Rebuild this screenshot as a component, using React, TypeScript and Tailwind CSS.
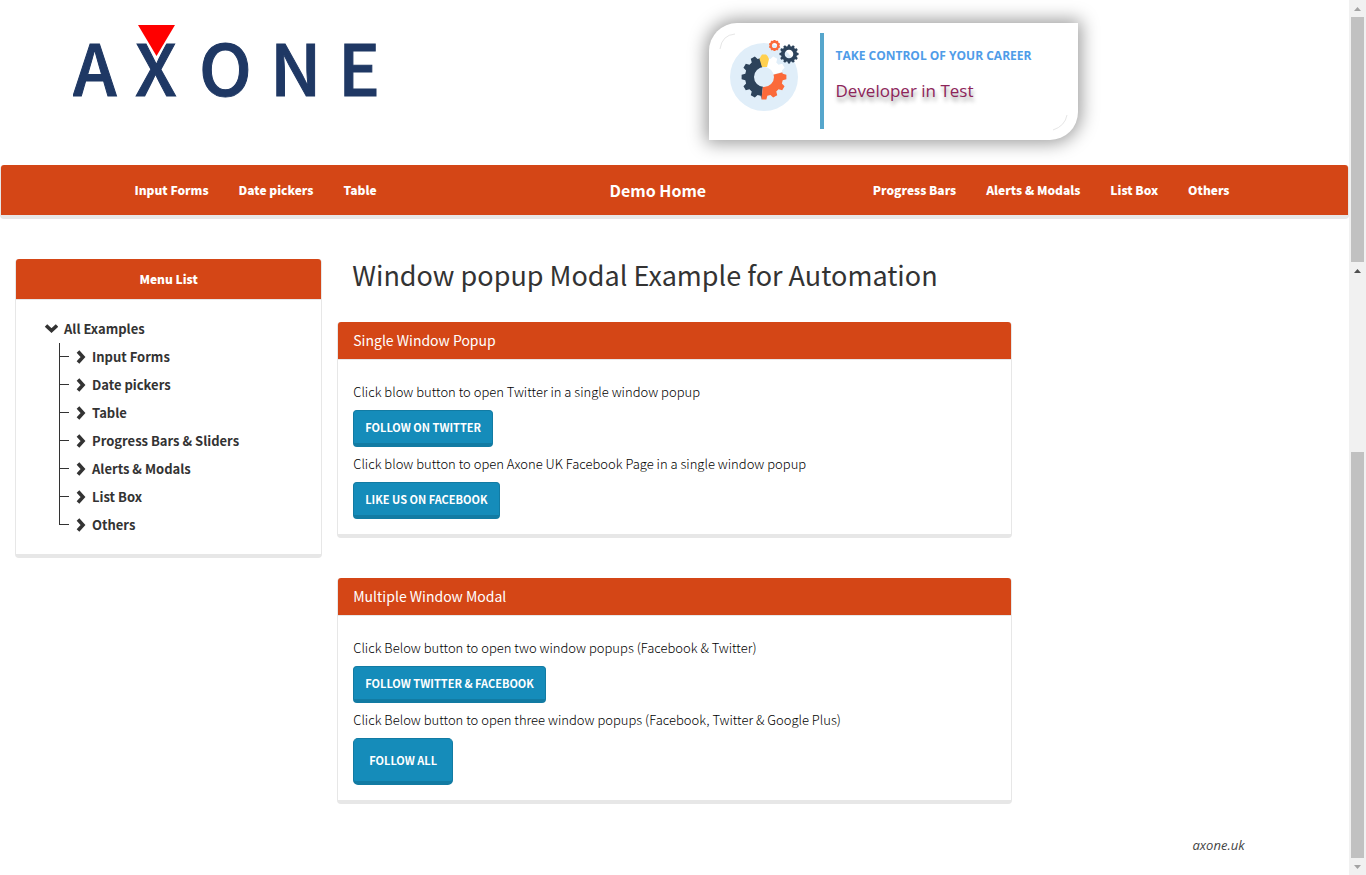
import React from "react";

const leftLinks = ["Input Forms", "Date pickers", "Table"];
const rightLinks = ["Progress Bars", "Alerts & Modals", "List Box", "Others"];
const examples = [
  "Input Forms",
  "Date pickers",
  "Table",
  "Progress Bars & Sliders",
  "Alerts & Modals",
  "List Box",
  "Others",
];

function Logo() {
  return (
    <svg viewBox="0 -12 320 112" className="h-[112px] w-[320px]" role="img" aria-label="Axone">
      <text
        x="0 62 126 197 265"
        y="73"
        fontSize="70"
        fontWeight="500"
        fill="#1f3864"
        stroke="#1f3864"
        strokeWidth="1"
        fontFamily="'Noto Sans CJK SC', sans-serif"
      >
        AXONE
      </text>
      <path d="M61 -4 L107 -4 L84 37 Z" fill="#fff" />
      <path d="M65 2 L102 2 L83.500 33 Z" fill="#f00" />
    </svg>
  );
}

function gearPath(cx: number, cy: number, outer: number, inner: number, hole: number, teeth: number) {
  const step = (Math.PI * 2) / teeth;
  const points: string[] = [];
  for (let i = 0; i < teeth; i++) {
    const mid = i * step - Math.PI / 2;
    const corners: [number, number][] = [
      [inner, -0.34],
      [outer, -0.2],
      [outer, 0.2],
      [inner, 0.34],
    ];
    for (const [r, f] of corners) {
      points.push(
        `${(cx + r * Math.cos(mid + f * step)).toFixed(2)} ${(cy + r * Math.sin(mid + f * step)).toFixed(2)}`
      );
    }
  }
  return `M${points.join("L")}Z M${cx - hole} ${cy}a${hole} ${hole} 0 1 0 ${hole * 2} 0a${hole} ${hole} 0 1 0 ${-hole * 2} 0Z`;
}

function Gears() {
  const big = gearPath(34, 37, 22.5, 19, 10, 12);
  return (
    <svg viewBox="0 0 70 72" className="h-[72px] w-[70px]" aria-hidden="true">
      <defs>
        <clipPath id="navyPart">
          <path d="M34 37 L29 10 L0 10 L0 72 L30 72 Z" />
        </clipPath>
        <clipPath id="whitePart">
          <path d="M34 37 L39 8 L70 8 L70 27 Z" />
        </clipPath>
        <clipPath id="orangePart">
          <path d="M34 37 L70 28 L70 72 L30 72 Z" />
        </clipPath>
      </defs>
      <circle cx="34" cy="37" r="34" fill="#e0eef9" />
      <path d={big} fillRule="evenodd" fill="#2d435b" clipPath="url(#navyPart)" />
      <path d={big} fillRule="evenodd" fill="#fff" clipPath="url(#whitePart)" />
      <path d={big} fillRule="evenodd" fill="#fb6a3a" clipPath="url(#orangePart)" />
      <path d="M31 16 L32 14.500 L36 14.500 L37.500 16 L39 19 L37 27 L32 27 L29.500 19 Z" fill="#ffd04f" />
      <path d={gearPath(44.5, 5.5, 5.6, 5, 2.6, 10)} fillRule="evenodd" fill="#fb6a3a" />
      <path d={gearPath(59, 14, 9.6, 8, 4.3, 12)} fillRule="evenodd" fill="#2d435b" />
    </svg>
  );
}

function Banner() {
  return (
    <div className="relative flex h-[117px] w-[369px] rounded-tl-[28px] rounded-br-[28px] bg-white pt-[10px] pl-[21px] font-['Open_Sans',sans-serif] shadow-[0_0_18px_3px_rgba(0,0,0,0.4)]">
      <svg viewBox="0 0 369 117" className="absolute inset-0 h-full w-full" aria-hidden="true">
        <path d="M11 26 Q13 12 26 11" fill="none" stroke="#e6e6e6" strokeWidth="1" />
        <path d="M358 92 Q356 103 344 107" fill="none" stroke="#e6e6e6" strokeWidth="1" />
      </svg>
      <div className="pt-[7px]">
        <Gears />
      </div>
      <div className="ml-5 h-24 w-1 bg-[#56a6cc]" />
      <div className="ml-3 pt-[13px]">
        <p className="text-[12px] leading-5 font-bold whitespace-nowrap text-[#4f9ce8]">TAKE CONTROL OF YOUR CAREER</p>
        <p className="mt-[13px] text-[17px] leading-6 text-[#8d2459] [text-shadow:1px_4px_4px_rgba(0,0,0,0.4)]">
          Developer in Test
        </p>
      </div>
    </div>
  );
}

function NavLinks({ items }: { items: string[] }) {
  return (
    <ul className="flex">
      {items.map((item) => (
        <li key={item}>
          <a href="#" className="block px-[15px] text-[12px] leading-[50px] font-black whitespace-nowrap text-white">
            {item}
          </a>
        </li>
      ))}
    </ul>
  );
}

function Chevron({ down = false }: { down?: boolean }) {
  return (
    <svg viewBox="0 0 14 14" className="h-[14px] w-[14px] shrink-0" aria-hidden="true">
      <path
        d={down ? "M2 3.500 L7.500 8.500 L13 3.500" : "M4 1.500 L9 7 L4 12.500"}
        fill="none"
        stroke="#333"
        strokeWidth="3.6"
      />
    </svg>
  );
}

function Sidebar() {
  return (
    <aside className="rounded-[4px] border border-t-0 border-b-4 border-[#e7e7e7] bg-white">
      <h2 className="rounded-t-[3px] bg-[#d44616] text-center text-[12px] leading-10 font-black text-white">
        Menu List
      </h2>
      <div className="border-t border-[#e7e7e7] py-[15px] pl-7 text-[13px] leading-7 font-bold">
        <a href="#" className="flex items-center gap-[6px]">
          <Chevron down />
          All Examples
        </a>
        <ul className="pl-[15px]">
          {examples.map((item, i) => (
            <li key={item} className="flex h-7">
              <span className={i === examples.length - 1 ? "h-[14px] w-px bg-[#333]" : "h-7 w-px bg-[#333]"} />
              <span className="mt-[13px] h-px w-[9px] bg-[#333]" />
              <a href="#" className="ml-[5px] flex items-center gap-1">
                <Chevron />
                {item}
              </a>
            </li>
          ))}
        </ul>
      </div>
    </aside>
  );
}

interface Action {
  text: string;
  label: string;
  large?: boolean;
}

function Panel({ title, actions }: { title: string; actions: Action[] }) {
  return (
    <section className="rounded-[4px] border border-t-0 border-b-4 border-[#e7e7e7] bg-white">
      <h3 className="rounded-t-[3px] bg-[#d44616] px-[15px] text-[14px] leading-[37px] text-white">{title}</h3>
      <div className="border-t border-[#e7e7e7] p-[15px]">
        {actions.map((a) => (
          <div key={a.label} className="flex flex-col items-start">
            <p className="pb-px text-[13px] leading-[34px] font-light text-black">{a.text}</p>
            <button
              type="button"
              className={
                a.large
                  ? "h-[47px] rounded-[5px] border border-b-4 border-[#127ba3] bg-[#158cba] px-[15px] text-[11px] leading-4 font-bold text-white uppercase"
                  : "h-[37px] rounded-[4px] border border-b-4 border-[#127ba3] bg-[#158cba] px-[11px] text-[11px] leading-4 font-bold text-white uppercase"
              }
            >
              {a.label}
            </button>
          </div>
        ))}
      </div>
    </section>
  );
}

function Arrow({ down = false, dark = false }: { down?: boolean; dark?: boolean }) {
  return (
    <svg viewBox="0 0 17 17" className="h-[17px] w-[17px] shrink-0" aria-hidden="true">
      <path d={down ? "M5 7 H12 L8.500 11 Z" : "M5 11 H12 L8.500 7 Z"} fill={dark ? "#505050" : "#a3a3a3"} />
    </svg>
  );
}

function ScrollTrack() {
  return (
    <div className="flex w-[17px] shrink-0 flex-col items-center bg-[#f1f1f1]" aria-hidden="true">
      <Arrow />
      <div className="w-[13px] grow-[245] bg-[#c1c1c1]" />
      <Arrow dark />
      <div className="grow-[173]" />
      <div className="w-[13px] grow-[406] bg-[#c1c1c1]" />
      <Arrow down />
    </div>
  );
}

export default function App() {
  return (
    <div className="flex min-h-screen bg-white font-['Noto_Sans_CJK_SC',sans-serif] text-[#333]">
      <div className="min-w-0 flex-1">
        <header className="grid grid-cols-2 items-start pb-[25px]">
          <a href="#" className="pt-[11px] pl-[73px]">
            <Logo />
          </a>
          <div className="pt-[23px] pl-[34px]">
            <Banner />
          </div>
        </header>

        <nav className="relative rounded-[4px] border border-t-0 border-b-4 border-[#e7e7e7]">
          <div className="rounded-t-[3px] bg-[#d44616]">
            <div className="mx-auto flex max-w-[1140px] items-center">
              <div className="w-5/12 pl-[15px]">
                <NavLinks items={leftLinks} />
              </div>
              <a href="#" className="pl-[30px] text-[16px] leading-[50px] font-bold whitespace-nowrap text-white">
                Demo Home
              </a>
              <div className="ml-auto">
                <NavLinks items={rightLinks} />
              </div>
            </div>
          </div>
        </nav>

        <div className="mt-10 flex items-start">
          <div className="w-1/4 px-[15px]">
            <Sidebar />
          </div>
          <main className="w-1/2">
            <h1 className="px-[15px] pb-8 text-[27px] leading-[31px] whitespace-nowrap">
              Window popup Modal Example for Automation
            </h1>
            <div className="flex flex-col gap-10">
              <Panel
                title="Single Window Popup"
                actions={[
                  { text: "Click blow button to open Twitter in a single window popup", label: "Follow On Twitter" },
                  {
                    text: "Click blow button to open Axone UK Facebook Page in a single window popup",
                    label: "Like us On Facebook",
                  },
                ]}
              />
              <Panel
                title="Multiple Window Modal"
                actions={[
                  {
                    text: "Click Below button to open two window popups (Facebook & Twitter)",
                    label: "Follow Twitter & Facebook",
                  },
                  {
                    text: "Click Below button to open three window popups (Facebook, Twitter & Google Plus)",
                    label: "Follow All",
                    large: true,
                  },
                ]}
              />
            </div>
          </main>
        </div>

        <footer className="mx-auto mt-[31px] flex max-w-[1140px] justify-end">
          <a
            href="#"
            className="font-['Open_Sans',sans-serif] text-[13px] leading-5 font-medium text-[#444] italic"
          >
            axone.uk
          </a>
        </footer>
      </div>
      <ScrollTrack />
    </div>
  );
}
